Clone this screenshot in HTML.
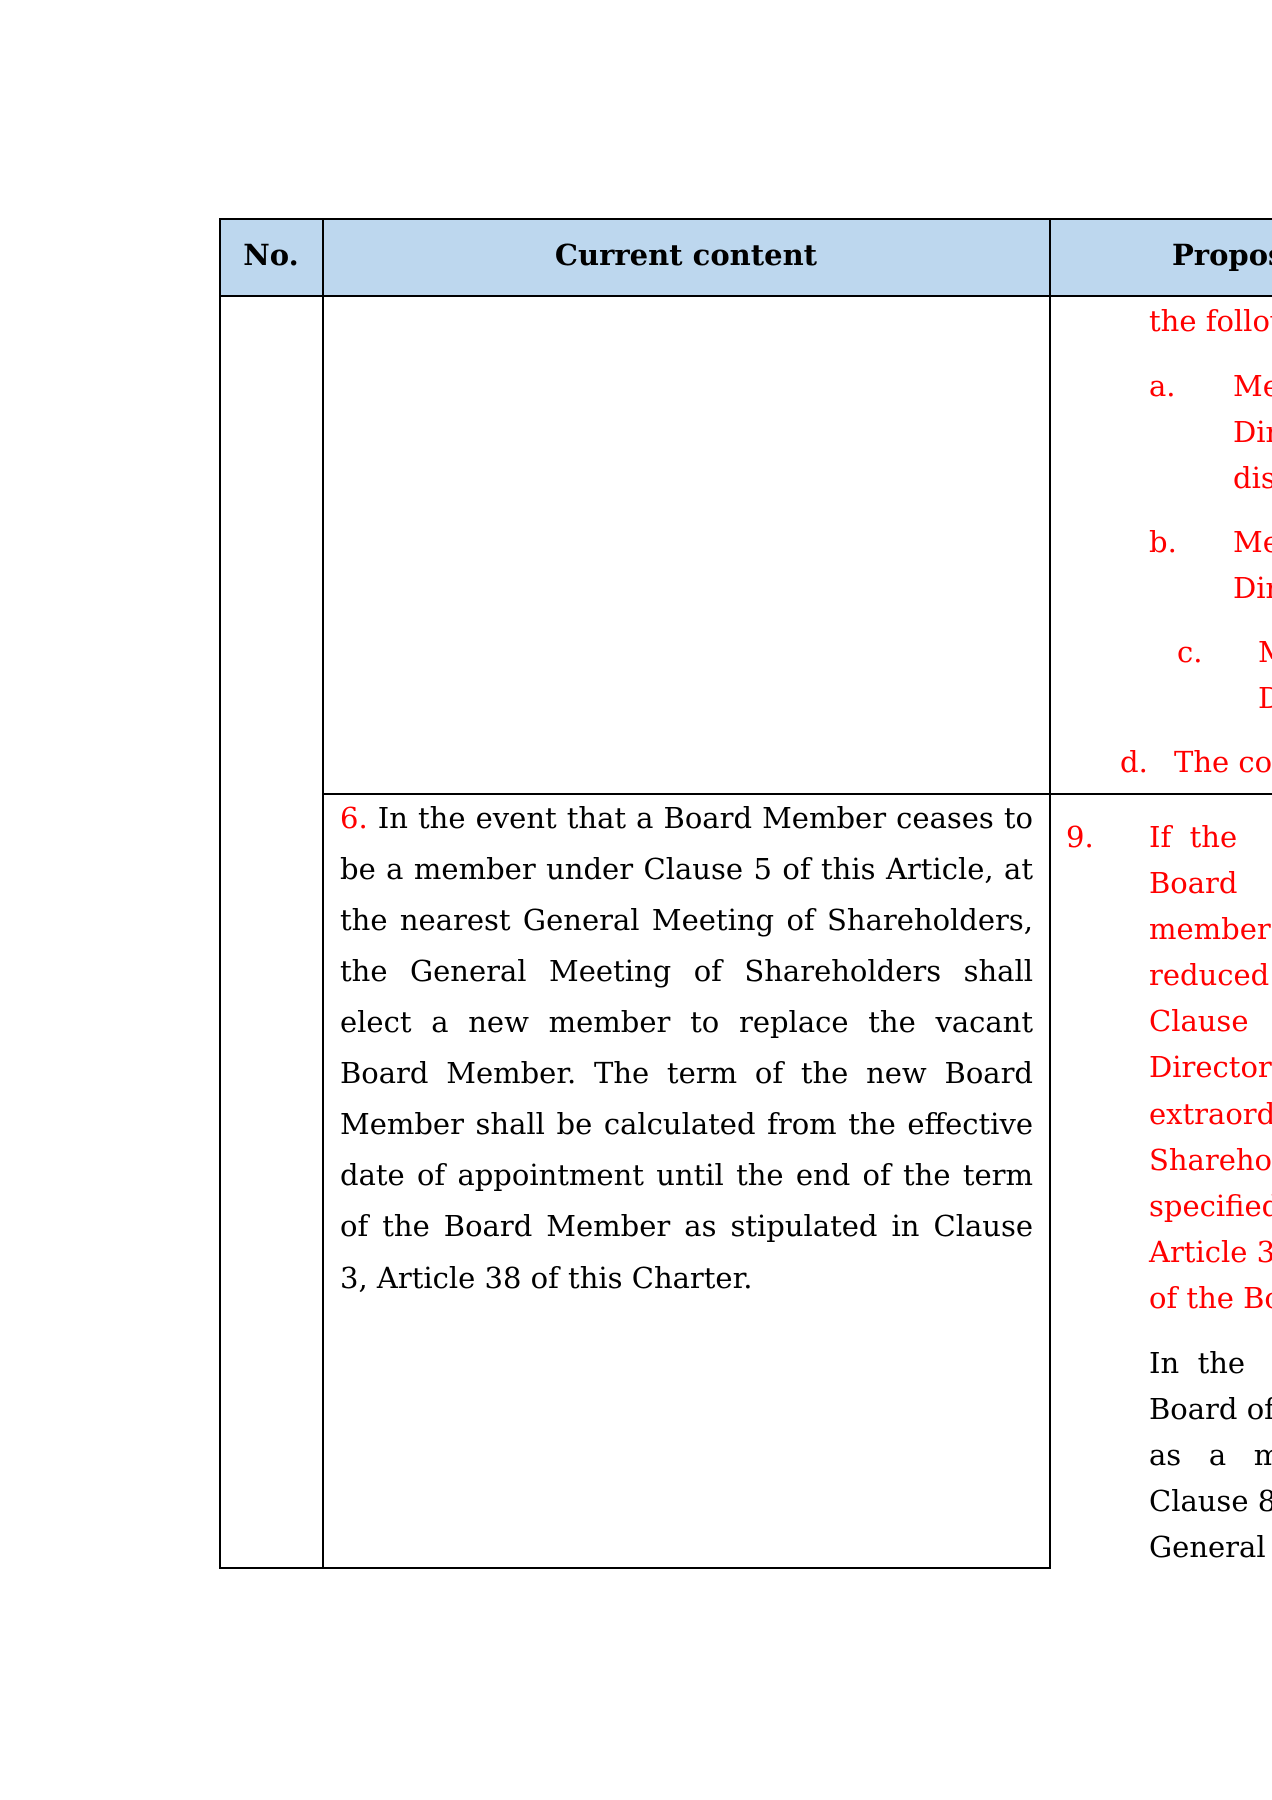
<!DOCTYPE html>
<html><head><meta charset="utf-8"><style>
body{margin:0;width:1272px;height:1800px;background:#fff;overflow:hidden;position:relative;font-family:"DejaVu Serif","Liberation Serif",serif;}
#w{position:absolute;left:0;top:0;width:1272px;height:1800px;overflow:hidden;}
.l{position:absolute;height:40px;line-height:40px;font-size:29px;white-space:nowrap;}
.j{text-align:justify;text-align-last:justify;white-space:normal;}
.r{color:#f00;}
.h{position:absolute;background:#bdd7ee;}
.v{position:absolute;background:#000;}
.b{font-weight:bold;}
</style></head><body><div id="w">
<div class="h" style="left:219px;top:218px;width:1053px;height:78px"></div>
<div class="v" style="left:219px;top:218px;width:1053px;height:1.5px"></div>
<div class="v" style="left:219px;top:295px;width:1053px;height:1.5px"></div>
<div class="v" style="left:323px;top:793px;width:949px;height:1.5px"></div>
<div class="v" style="left:219px;top:1567px;width:831px;height:1.5px"></div>
<div class="v" style="left:219px;top:218px;width:1.5px;height:1351px"></div>
<div class="v" style="left:322px;top:218px;width:1.5px;height:1351px"></div>
<div class="v" style="left:1049px;top:218px;width:1.5px;height:1351px"></div>
<div class="l b" style="left:219px;width:104px;text-align:center;top:235px">No.</div>
<div class="l b" style="left:323px;width:726px;text-align:center;top:235px">Current content</div>
<div class="l b" style="left:1172px;top:235px">Proposed</div>
<div class="l r" style="left:1149px;top:301px">the following</div>
<div class="l r" style="left:1149px;top:366px">a.</div>
<div class="l r" style="left:1233px;top:366px">Member</div>
<div class="l r" style="left:1233px;top:412px">Director</div>
<div class="l r" style="left:1233px;top:458px">discharged</div>
<div class="l r" style="left:1149px;top:522px">b.</div>
<div class="l r" style="left:1233px;top:522px">Member</div>
<div class="l r" style="left:1233px;top:568px">Director</div>
<div class="l r" style="left:1177px;top:632px">c.</div>
<div class="l r" style="left:1258px;top:632px">Member</div>
<div class="l r" style="left:1258px;top:678px">Director</div>
<div class="l r" style="left:1120px;top:742px">d.</div>
<div class="l r" style="left:1174px;top:742px">The company</div>
<div class="l j" style="left:340px;width:693px;top:798px"><span class="r">6.</span> In the event that a Board Member ceases to</div>
<div class="l j" style="left:340px;width:693px;top:849px">be a member under Clause 5 of this Article, at</div>
<div class="l j" style="left:340px;width:693px;top:900px">the nearest General Meeting of Shareholders,</div>
<div class="l j" style="left:340px;width:693px;top:951px">the General Meeting of Shareholders shall</div>
<div class="l j" style="left:340px;width:693px;top:1002px">elect a new member to replace the vacant</div>
<div class="l j" style="left:340px;width:693px;top:1053px">Board Member. The term of the new Board</div>
<div class="l j" style="left:340px;width:693px;top:1104px">Member shall be calculated from the effective</div>
<div class="l j" style="left:340px;width:693px;top:1155px">date of appointment until the end of the term</div>
<div class="l j" style="left:340px;width:693px;top:1206px">of the Board Member as stipulated in Clause</div>
<div class="l" style="left:340px;top:1258px">3, Article 38 of this Charter.</div>
<div class="l r" style="left:1066px;top:817px">9.</div>
<div class="l r" style="left:1149px;top:817px">If&nbsp;&nbsp;the</div>
<div class="l r" style="left:1149px;top:863px">Board</div>
<div class="l r" style="left:1149px;top:909px">members</div>
<div class="l r" style="left:1149px;top:955px">reduced</div>
<div class="l r" style="left:1149px;top:1001px">Clause</div>
<div class="l r" style="left:1149px;top:1047px">Directors</div>
<div class="l r" style="left:1149px;top:1094px">extraordinary</div>
<div class="l r" style="left:1149px;top:1140px">Shareholders</div>
<div class="l r" style="left:1149px;top:1186px">specified</div>
<div class="l r" style="left:1149px;top:1232px">Article 38</div>
<div class="l r" style="left:1149px;top:1278px">of the Board</div>
<div class="l" style="left:1149px;top:1343px">In&nbsp;&nbsp;the</div>
<div class="l" style="left:1149px;top:1389px">Board of</div>
<div class="l" style="left:1149px;top:1435px">as&nbsp;&nbsp;&nbsp;a&nbsp;&nbsp;&nbsp;member</div>
<div class="l" style="left:1149px;top:1481px">Clause 8</div>
<div class="l" style="left:1149px;top:1527px">General</div>
</div></body></html>
